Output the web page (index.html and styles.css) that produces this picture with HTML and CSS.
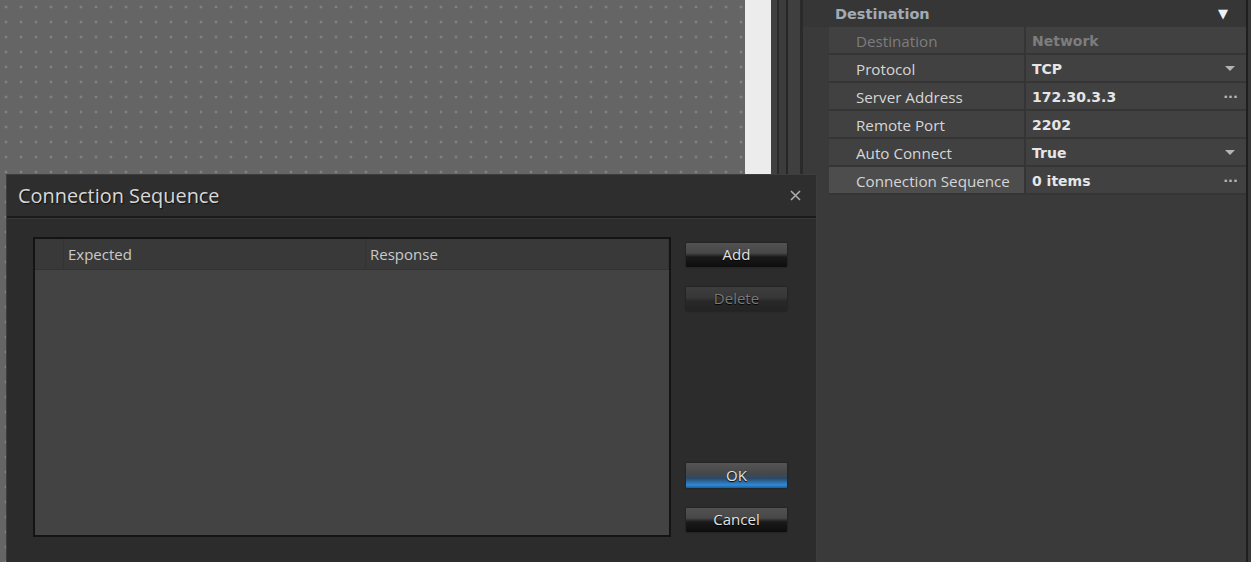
FILE: index.html
```html
<!DOCTYPE html>
<html lang="en">
<head>
    <meta charset="UTF-8">
    <title>Connection Sequence</title>
    <link rel="stylesheet" href="styles.css">
</head>
<body>
    <div class="canvas"></div>
    <div class="ruler"></div>
    <div class="splitter"></div>

    <div class="props">
        <div class="props-header">
            <span>Destination</span>
            <span class="collapse">&#9660;</span>
        </div>
        <div class="grid">
            <div class="label disabled">Destination</div>
            <div class="value disabled">Network</div>

            <div class="label">Protocol</div>
            <div class="value">TCP <span class="drop"></span></div>

            <div class="label">Server Address</div>
            <div class="value">172.30.3.3 <span class="dots">&middot;&middot;&middot;</span></div>

            <div class="label">Remote Port</div>
            <div class="value">2202</div>

            <div class="label">Auto Connect</div>
            <div class="value">True <span class="drop"></span></div>

            <div class="label selected">Connection Sequence</div>
            <div class="value">0 items <span class="dots">&middot;&middot;&middot;</span></div>
        </div>
    </div>
    <div class="edge"></div>

    <!-- modal window, sits over the designer -->
    <div class="dialog">
        <div class="dialog-title">
            <span>Connection Sequence</span>
            <svg class="close" width="11" height="11" viewBox="0 0 11 11">
                <path d="M1 1 L10 10 M10 1 L1 10" stroke="#ababab" stroke-width="1.6" fill="none"/>
            </svg>
        </div>
        <div class="dialog-body">
            <div class="table">
                <div class="table-head">
                    <div class="col-index"></div>
                    <div class="col-expected">Expected</div>
                    <div class="col-response">Response</div>
                </div>
                <div class="table-rows"></div>
            </div>
            <div class="buttons">
                <button class="btn">Add</button>
                <button class="btn" disabled>Delete</button>
                <button class="btn primary">OK</button>
                <button class="btn">Cancel</button>
            </div>
        </div>
    </div>
</body>
</html>
```

FILE: styles.css
```css
body {
    margin: 0;
    display: flex;
    height: 562px;
    overflow: hidden;
    background: #3c3c3c;
    font-family: "Open Sans", "Noto Sans", sans-serif;
    position: relative;
}

.canvas {
    width: 745px;
    flex-shrink: 0;
    background-color: #656565;
    background-image: radial-gradient(circle, #8e8e8e 0.9px, transparent 1.4px);
    background-size: 15px 15px;
    background-position: -1.5px -0.5px;
}

.ruler {
    width: 26px;
    flex-shrink: 0;
    background: #ececec;
}

.splitter {
    width: 32px;
    flex-shrink: 0;
    background: linear-gradient(to right,
        #404040 0, #404040 6px,
        #2a2a2a 6px, #2a2a2a 8px,
        #3c3c3c 8px, #3c3c3c 15px,
        #262626 15px, #262626 17px,
        #3f3f3f 17px, #3f3f3f 29px,
        #2a2a2a 29px);
}

.props {
    width: 443px;
    flex-shrink: 0;
    background: #3a3a3a;
    border-right: 2px solid #1f1f1f;
}

.edge {
    flex: 1;
    background: #383838;
}

.props-header {
    height: 27px;
    display: flex;
    align-items: center;
    justify-content: space-between;
    padding: 0 18px 0 32px;
    background: #363636;
    font-family: "DejaVu Sans", sans-serif;
    font-weight: bold;
    font-size: 14.5px;
    color: #a2abb4;
}

.collapse {
    font-size: 13px;
    color: #f2f2f2;
}

.grid {
    margin-left: 26px;
    display: grid;
    grid-template-columns: 195px 1fr;
    grid-auto-rows: 26px;
    gap: 2px;
    padding-bottom: 2px;
    background: #353535;
}

.label, .value {
    display: flex;
    align-items: center;
    background: #414141;
    white-space: nowrap;
}

.label {
    padding-left: 27px;
    padding-top: 1px;
    font-size: 15.2px;
    color: #d6d6d6;
}

.label.selected {
    background: #4d4d4d;
}

.value {
    padding: 1px 8px 0 6px;
    font-family: "DejaVu Sans", sans-serif;
    font-weight: bold;
    font-size: 14px;
    color: #e6e6e6;
}

.label.disabled, .value.disabled {
    color: #7d7d7d;
}

.drop {
    margin-left: auto;
    margin-right: 3px;
    width: 0;
    height: 0;
    border-left: 5px solid transparent;
    border-right: 5px solid transparent;
    border-top: 5px solid #b4b4b4;
}

.dots {
    margin-left: auto;
    font-size: 13px;
    color: #b8b8b8;
}

.dialog {
    position: absolute;
    left: 6px;
    top: 174px;
    width: 809px;
    height: 400px;
    border: 1px solid #3d3d3d;
    background: #2c2c2c;
}

.dialog-title {
    height: 41px;
    display: flex;
    align-items: center;
    justify-content: space-between;
    padding: 0 15px 0 11px;
    background: #2e2e2e;
    border-bottom: 2px solid #1b1b1b;
    font-size: 19.9px;
    color: #d8d8d8;
    text-shadow: 1px 1px 1px #111;
}

.dialog-body {
    display: flex;
    gap: 15px;
    padding: 18px 29px 0 26px;
    border-top: 1px solid #383838;
}

.table {
    width: 634px;
    height: 296px;
    border: 2px solid #141414;
    background: #434343;
    display: flex;
    flex-direction: column;
}

.table-head {
    height: 30px;
    display: flex;
    background: #393939;
    border-bottom: 1px solid #333;
    font-size: 15px;
    color: #cacaca;
}

.table-head div {
    display: flex;
    align-items: center;
    padding-left: 4px;
    padding-bottom: 1px;
    border-right: 1px solid #333;
}

.col-index {
    width: 24px;
}

.col-expected {
    width: 297px;
}

.col-response {
    flex: 1;
}

.buttons {
    width: 101px;
    height: 300px;
    display: flex;
    flex-direction: column;
    gap: 19px;
    padding: 6px 0 5px;
    box-sizing: border-box;
}

.btn {
    height: 24px;
    border: none;
    border-radius: 1px;
    padding: 0 0 2px;
    font-family: "Open Sans", "Noto Sans", sans-serif;
    font-size: 15px;
    color: #e2e2e2;
    text-shadow: 0 1px 1px #000;
    background: linear-gradient(#525252 0%, #474747 42%, #1a1a1a 58%, #0d0d0d 100%);
    box-shadow: 0 0 2px rgba(0, 0, 0, 0.6);
}

.btn + .btn {
    margin-top: 1px;
}

.btn:disabled {
    color: #7a7a7a;
    background: linear-gradient(#3d3d3d 0%, #373737 45%, #282828 58%, #232323 100%);
}

.btn.primary {
    margin-top: auto;
    height: 25px;
    background: linear-gradient(#555 0%, #484848 38%, #2c4a68 62%, #2f8ad8 88%, #1b5c9c 100%);
}
```
